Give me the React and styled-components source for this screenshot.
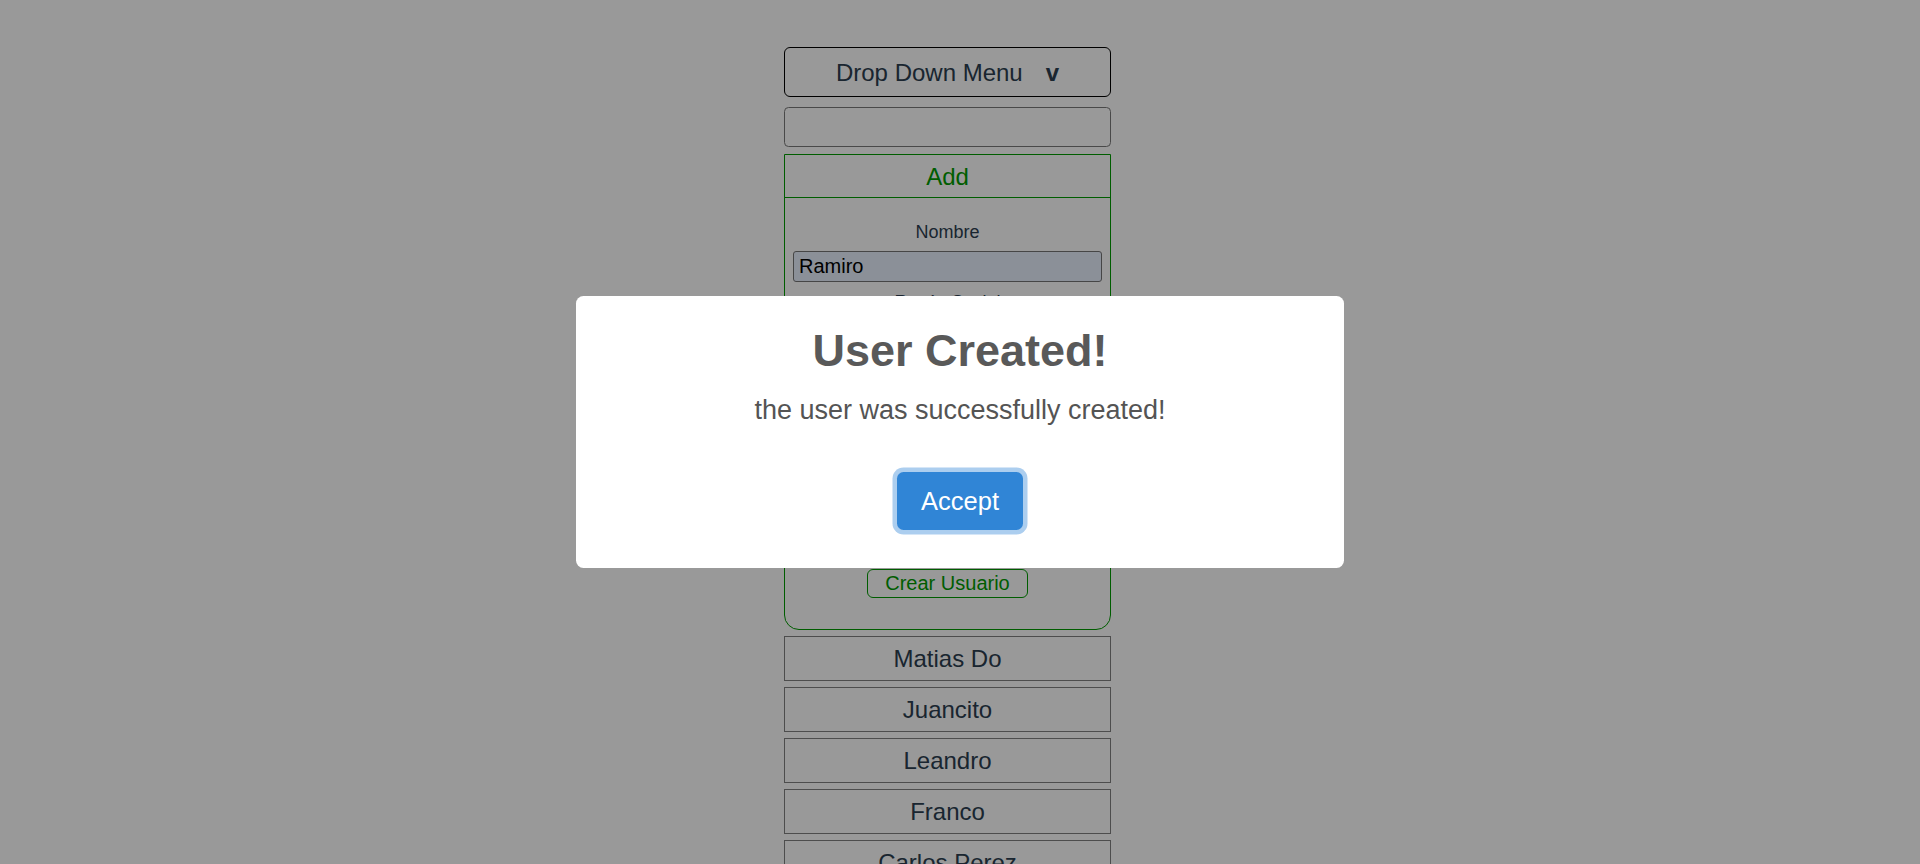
import React from "react";
import styled, { createGlobalStyle } from "styled-components";

const users = ["Matias Do", "Juancito", "Leandro", "Franco", "Carlos Perez", "Lucia", "Sofia"];
const fields = [
  { label: "Nombre", value: "Ramiro" },
  { label: "Razón Social", value: "" },
  { label: "CUIT", value: "" },
  { label: "Dirección", value: "" },
];

function App() {
  return (
    <>
      <GlobalStyle />
      <Page>
        <Column>
          <DropDown>
            Drop Down Menu<Caret>v</Caret>
          </DropDown>
          <SearchBox type="text" />
          <AddBox>
            <AddHeader>Add</AddHeader>
            <AddBody>
              {fields.map((f) => (
                <Field key={f.label}>
                  <Label>{f.label}</Label>
                  <TextInput type="text" defaultValue={f.value} $filled={f.value !== ""} />
                </Field>
              ))}
              <CreateButton>Crear Usuario</CreateButton>
            </AddBody>
          </AddBox>
          {users.map((u) => (
            <UserRow key={u}>{u}</UserRow>
          ))}
        </Column>
      </Page>
      <Overlay>
        <Modal>
          <Title>User Created!</Title>
          <Message>the user was successfully created!</Message>
          <Actions>
            <ConfirmButton>Accept</ConfirmButton>
          </Actions>
        </Modal>
      </Overlay>
    </>
  );
}

export default App;

const GlobalStyle = createGlobalStyle`
  html, body {
    margin: 0;
    padding: 0;
    overflow: hidden;
    background: #fff;
    font-family: "Liberation Sans", Arial, sans-serif;
  }
  * {
    box-sizing: border-box;
  }
`;

const Page = styled.div`
  display: flex;
  justify-content: center;
  padding: 47px 25px 0 0;
  color: #2c3e50;
  text-align: center;
`;

const Column = styled.div`
  width: 327px;
  display: flex;
  flex-direction: column;
`;

const DropDown = styled.div`
  height: 50px;
  padding-top: 2px;
  border: 1px solid #000;
  border-radius: 6px;
  display: flex;
  align-items: center;
  justify-content: center;
  font-size: 24px;
`;

const Caret = styled.span`
  font-weight: bold;
  margin-left: 23px;
`;

const SearchBox = styled.input`
  height: 40px;
  margin-top: 10px;
  border: 1px solid #7a7a7a;
  border-radius: 4.5px;
  background: #fff;
  outline: none;
`;

const AddBox = styled.div`
  margin-top: 7px;
  border: 1px solid rgb(0, 155, 0);
  border-radius: 0 0 15px 15px;
  color: rgb(0, 155, 0);
`;

const AddHeader = styled.div`
  height: 43px;
  line-height: 43px;
  font-size: 24px;
  border-bottom: 1px solid rgb(0, 155, 0);
`;

const AddBody = styled.div`
  display: flex;
  flex-direction: column;
  align-items: center;
  padding: 24px 8px 31px;
`;

const Field = styled.div`
  width: 100%;
  display: flex;
  flex-direction: column;
  align-items: center;
  margin-bottom: 10px;
`;

const Label = styled.label`
  font-size: 18px;
  line-height: 21px;
  color: #2c3e50;
  margin-bottom: 8px;
`;

const TextInput = styled.input`
  width: 100%;
  height: 31px;
  border: 1px solid #767676;
  border-radius: 3px;
  padding: 0 5px;
  font-family: "Liberation Sans", Arial, sans-serif;
  font-size: 20px;
  color: #000;
  background: ${(p) => (p.$filled ? "#e8f0fe" : "#fff")};
  outline: none;
`;

const CreateButton = styled.button`
  margin-top: 67px;
  height: 29px;
  padding: 0 17px;
  border: 1px solid rgb(0, 155, 0);
  border-radius: 6px;
  background: transparent;
  color: rgb(0, 155, 0);
  font-family: "Liberation Sans", Arial, sans-serif;
  font-size: 20px;
  line-height: 27px;
`;

const UserRow = styled.div`
  height: 45px;
  margin-top: 6px;
  flex-shrink: 0;
  border: 1px solid #808080;
  display: flex;
  align-items: center;
  justify-content: center;
  font-size: 24px;
`;

const Overlay = styled.div`
  position: fixed;
  inset: 0;
  background: rgba(0, 0, 0, 0.4);
  display: flex;
  align-items: center;
  justify-content: center;
`;

const Modal = styled.div`
  width: 768px;
  background: #fff;
  border-radius: 7.5px;
  padding: 29px 30px 38px;
  text-align: center;
`;

const Title = styled.h2`
  margin: 0 0 18px;
  font-size: 45px;
  line-height: 52px;
  font-weight: 600;
  color: #595959;
`;

const Message = styled.div`
  font-size: 27px;
  line-height: 31px;
  color: #545454;
`;

const Actions = styled.div`
  margin-top: 46px;
  display: flex;
  justify-content: center;
`;

const ConfirmButton = styled.button`
  width: 126px;
  height: 58px;
  border: none;
  border-radius: 6.5px;
  background: #3085d6;
  color: #fff;
  font-family: "Liberation Sans", Arial, sans-serif;
  font-size: 25.5px;
  box-shadow: 0 0 0 4.5px rgba(48, 133, 214, 0.4);
`;
